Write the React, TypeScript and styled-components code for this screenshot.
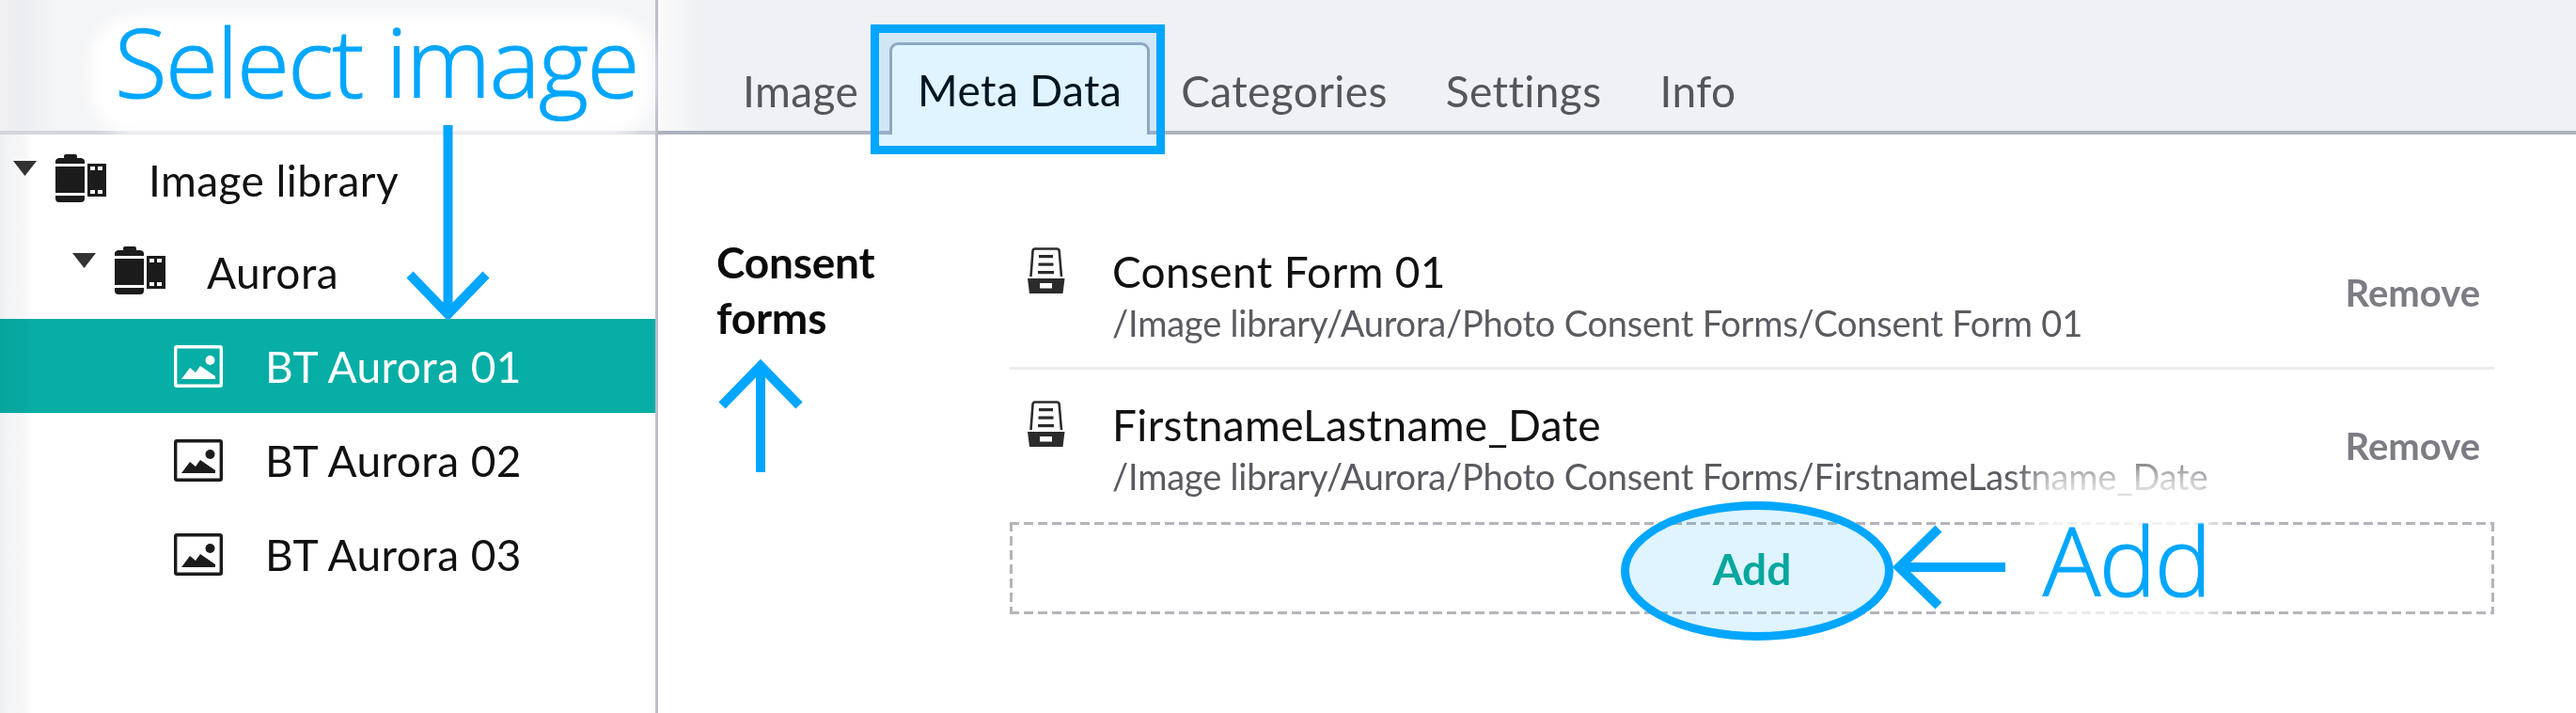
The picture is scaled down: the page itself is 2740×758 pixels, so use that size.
import React from "react";
import styled, { createGlobalStyle } from "styled-components";

const Global = createGlobalStyle`
  html, body { margin: 0; padding: 0; background: #fff; }
  body { font-family: Lato, "Open Sans", "Liberation Sans", sans-serif; }
`;

const Page = styled.div`
  position: relative;
  width: 2740px;
  height: 758px;
  overflow: hidden;
  display: grid;
  grid-template-columns: 697px 3px 1fr;
  background: #fff;
`;

const Sidebar = styled.aside`
  display: flex;
  flex-direction: column;
`;

const SidebarHead = styled.div`
  height: 139px;
  flex: none;
  background: #f4f5f7;
  border-bottom: 4px solid #d3d5dc;
`;

const Tree = styled.div`
  display: flex;
  flex-direction: column;
`;

const TreeRow = styled.div<{ $indent: number; $selected?: boolean; $first?: boolean }>`
  height: ${(p) => (p.$first ? "96px" : "100px")};
  display: flex;
  align-items: center;
  padding-left: ${(p) => p.$indent}px;
  margin-right: -1px;
  font-size: 46px;
  letter-spacing: 0.45px;
  color: ${(p) => (p.$selected ? "#fff" : "#111")};
  background: ${(p) => (p.$selected ? "#07aea5" : "transparent")};
`;

const RowCaret = styled.svg`
  width: 25px;
  height: 16px;
  flex: none;
  margin: -24px 20px 0 0;
`;

const RowIcon = styled.svg<{ $w: number; $h: number; $gap: number; $lift?: number }>`
  width: ${(p) => p.$w}px;
  height: ${(p) => p.$h}px;
  flex: none;
  margin-right: ${(p) => p.$gap}px;
  margin-top: ${(p) => -(p.$lift ?? 0)}px;
`;

const RowLabel = styled.span`
  line-height: 1.2;
  white-space: nowrap;
  margin-top: 2px;
`;

const Divider = styled.div`
  background: #bdbdcb;
`;

const Main = styled.main`
  display: flex;
  flex-direction: column;
`;

const TabBar = styled.nav`
  height: 143px;
  box-sizing: border-box;
  flex: none;
  display: flex;
  align-items: flex-end;
  gap: 4px;
  padding-left: 61px;
  background: #eff1f4;
  border-bottom: 4px solid #aeb2bd;
`;

const Tab = styled.div<{ $active?: boolean }>`
  height: ${(p) => (p.$active ? "98px" : "94px")};
  box-sizing: border-box;
  padding: ${(p) => (p.$active ? "20px 27px 0" : "24px 29px 0")};
  margin-bottom: ${(p) => (p.$active ? "-4px" : "0")};
  display: flex;
  align-items: flex-start;
  font-size: 46px;
  letter-spacing: 0.4px;
  line-height: 56px;
  color: ${(p) => (p.$active ? "#000" : "#55565b")};
  white-space: nowrap;
  ${(p) =>
    p.$active
      ? `background:#fff;border:3px solid #a3a9bb;border-bottom:none;border-radius:9px 9px 0 0;`
      : ""}
`;

const Content = styled.div`
  display: grid;
  grid-template-columns: 312px 1579px;
  padding: 87px 0 0 62px;
`;

const FieldLabel = styled.div`
  font-size: 46px;
  font-weight: 700;
  line-height: 59px;
  letter-spacing: -0.2px;
  color: #0b0b0b;
  margin-top: 19px;
`;

const List = styled.div`
  display: flex;
  flex-direction: column;
`;

const Item = styled.div<{ $last?: boolean }>`
  height: 163px;
  box-sizing: border-box;
  display: flex;
  align-items: flex-start;
  padding: 33px 15px 0 19px;
  border-bottom: ${(p) => (p.$last ? "none" : "3px solid #ebebeb")};
`;

const DrawerIcon = styled.svg`
  width: 40px;
  height: 49px;
  flex: none;
  margin-right: 50px;
`;

const ItemText = styled.div`
  flex: 1;
  display: flex;
  flex-direction: column;
  min-width: 0;
`;

const ItemTitle = styled.div`
  font-size: 46px;
  line-height: 54px;
  letter-spacing: 0.35px;
  color: #111;
  white-space: nowrap;
  margin-top: -1px;
`;

const ItemPath = styled.div`
  font-size: 38px;
  line-height: 52px;
  letter-spacing: -0.2px;
  color: #5a5a60;
  white-space: nowrap;
  margin-top: 1px;
`;

const RemoveBtn = styled.div`
  font-size: 40px;
  font-weight: 700;
  color: #7c7c84;
  line-height: 46px;
  margin-top: 25px;
`;

const AddBox = styled.div`
  position: relative;
  height: 98px;
  margin-top: -1px;
  box-sizing: border-box;
  display: flex;
  align-items: center;
  justify-content: center;
  background:
    repeating-linear-gradient(90deg, #b4b4bb 0 10px, transparent 10px 15px) left top / 100% 3px no-repeat,
    repeating-linear-gradient(90deg, #b4b4bb 0 10px, transparent 10px 15px) left bottom / 100% 3px no-repeat,
    repeating-linear-gradient(180deg, #b4b4bb 0 10px, transparent 10px 15px) left top / 3px 100% no-repeat,
    repeating-linear-gradient(180deg, #b4b4bb 0 10px, transparent 10px 15px) right top / 3px 100% no-repeat;
`;

const AddBtn = styled.div`
  font-size: 46px;
  font-weight: 700;
  color: #09a78f;
`;

const SideTint = styled.div`
  position: absolute;
  left: 0;
  top: 143px;
  bottom: 0;
  width: 33px;
  background: linear-gradient(90deg, #eef0f2 0, #f3f4f5 25%, #f7f7f8 80%, #fff 100%);
  mix-blend-mode: multiply;
`;

const HeadTint = styled.div`
  position: absolute;
  left: 0;
  top: 0;
  width: 60px;
  height: 139px;
  background: linear-gradient(90deg, #f0f0f2, #ecedf0 40%, #f4f5f7 100%);
`;

const TabBarGlow = styled.div`
  position: absolute;
  left: 700px;
  top: 0;
  width: 46px;
  height: 139px;
  background: linear-gradient(90deg, #fafafb, #f5f6f7 50%, #eff1f4 100%);
`;

const SelectGlow = styled.div`
  position: absolute;
  left: 96px;
  top: 16px;
  width: 598px;
  height: 127px;
  border-radius: 48px;
  background: #fff;
  filter: blur(8px);
`;

const AddGlow = styled.div`
  position: absolute;
  left: 2160px;
  top: 498px;
  width: 200px;
  height: 170px;
  background: #fff;
  opacity: 0.82;
  filter: blur(14px);
`;

const Callout = styled.div`
  position: absolute;
  font-family: "Open Sans", "Liberation Sans", sans-serif;
  font-weight: 300;
  color: #00a6ff;
  font-size: 102px;
  line-height: 122px;
  letter-spacing: -1.6px;
  -webkit-text-stroke: 1.2px #00a6ff;
  white-space: nowrap;
`;

const SelectCallout = styled(Callout)`
  left: 122px;
  top: 4px;
`;

const AddCallout = styled(Callout)`
  left: 2173px;
  top: 534px;
`;

const TabHighlight = styled.div`
  position: absolute;
  left: 926px;
  top: 26px;
  width: 313px;
  height: 138px;
  box-sizing: border-box;
  border: 9px solid #00a6ff;
  background: rgba(0, 166, 255, 0.125);
`;

const AddRing = styled.div`
  position: absolute;
  left: 1724px;
  top: 533px;
  width: 290px;
  height: 148px;
  box-sizing: border-box;
  border: 9px solid #00a6ff;
  border-radius: 50%;
  background: rgba(0, 166, 255, 0.125);
`;

const ArrowLayer = styled.svg`
  position: absolute;
  left: 0;
  top: 0;
  width: 2740px;
  height: 758px;
  pointer-events: none;
`;

const Film = () => (
  <>
    <rect x="9" y="0" width="14" height="5" rx="2" fill="#1c1b1b" />
    <path d="M0 9a4 4 0 0 1 4-5h23a4 4 0 0 1 4 5v1H0z" fill="#1c1b1b" />
    <rect x="0" y="13" width="31" height="28" fill="#1c1b1b" />
    <path d="M0 44h31v3a4 4 0 0 1-4 4H4a4 4 0 0 1-4-4z" fill="#1c1b1b" />
    <rect x="34" y="10" width="20" height="35" fill="#1c1b1b" />
    <g fill="#fff">
      <rect x="37" y="13" width="5" height="4" />
      <rect x="45" y="13" width="5" height="4" />
      <rect x="37" y="38" width="5" height="4" />
      <rect x="45" y="38" width="5" height="4" />
    </g>
  </>
);

const Caret = () => (
  <RowCaret viewBox="0 0 25 16">
    <path d="M0 0h25L12.5 16z" fill="#333" />
  </RowCaret>
);

const Picture = ({ color }: { color: string }) => (
  <RowIcon $w={52} $h={45} $gap={45} viewBox="0 0 52 45">
    <rect x="1.7" y="1.7" width="48.6" height="41.6" rx="1.5" fill="none" stroke={color} strokeWidth="3.4" />
    <circle cx="38.5" cy="16" r="5" fill={color} />
    <path d="M8 36 L17 24 L23 29 L28 22 L44 33 V36z" fill={color} />
  </RowIcon>
);

const Drawer = () => (
  <DrawerIcon viewBox="0 0 40 49">
    <path d="M3.5 31 L5.5 4 Q5.7 1.5 8 1.5 H31 Q33.5 1.5 33.7 4 L36 31" fill="none" stroke="#2b2b2b" strokeWidth="2.6" />
    <g fill="#2b2b2b">
      <rect x="12" y="8" width="15" height="3.2" />
      <rect x="11.5" y="16.5" width="16" height="3.2" />
      <rect x="11" y="25" width="17" height="3.2" />
      <path d="M0 33 H39.5 L37.5 49 H2z" />
    </g>
    <rect x="13" y="38" width="13" height="5.5" fill="#fff" />
  </DrawerIcon>
);

const items = [
  { title: "Consent Form 01", path: "/Image library/Aurora/Photo Consent Forms/Consent Form 01" },
  { title: "FirstnameLastname_Date", path: "/Image library/Aurora/Photo Consent Forms/FirstnameLastname_Date" },
];

export default function App() {
  return (
    <Page>
      <Global />
      <Sidebar>
        <SidebarHead />
        <Tree>
          <TreeRow $first $indent={14}>
            <Caret />
            <RowIcon $w={54} $h={51} $gap={45} $lift={4} viewBox="0 0 54 51"><Film /></RowIcon>
            <RowLabel>Image library</RowLabel>
          </TreeRow>
          <TreeRow $indent={77}>
            <Caret />
            <RowIcon $w={54} $h={51} $gap={44} $lift={4} viewBox="0 0 54 51"><Film /></RowIcon>
            <RowLabel>Aurora</RowLabel>
          </TreeRow>
          <TreeRow $selected $indent={185}>
            <Picture color="#fff" />
            <RowLabel>BT Aurora 01</RowLabel>
          </TreeRow>
          <TreeRow $indent={185}>
            <Picture color="#1c1b1b" />
            <RowLabel>BT Aurora 02</RowLabel>
          </TreeRow>
          <TreeRow $indent={185}>
            <Picture color="#1c1b1b" />
            <RowLabel>BT Aurora 03</RowLabel>
          </TreeRow>
        </Tree>
      </Sidebar>
      <Divider />
      <Main>
        <TabBar>
          <Tab>Image</Tab>
          <Tab $active>Meta Data</Tab>
          <Tab>Categories</Tab>
          <Tab>Settings</Tab>
          <Tab>Info</Tab>
        </TabBar>
        <Content>
          <FieldLabel>
            Consent
            <br />
            forms
          </FieldLabel>
          <List>
            {items.map((it, i) => (
              <Item key={it.title} $last={i === items.length - 1}>
                <Drawer />
                <ItemText>
                  <ItemTitle>{it.title}</ItemTitle>
                  <ItemPath>{it.path}</ItemPath>
                </ItemText>
                <RemoveBtn>Remove</RemoveBtn>
              </Item>
            ))}
            <AddBox>
              <AddBtn>Add</AddBtn>
            </AddBox>
          </List>
        </Content>
      </Main>
      <HeadTint />
      <TabBarGlow />
      <SideTint />
      <SelectGlow />
      <AddGlow />
      <SelectCallout>Select image</SelectCallout>
      <AddCallout>Add</AddCallout>
      <TabHighlight />
      <AddRing />
      <ArrowLayer viewBox="0 0 2740 758">
        <g fill="none" stroke="#00a6ff" strokeWidth="10">
          <path d="M476.5 133V334M436 292 L476.5 334 L517 292" />
          <path d="M809 502V390M768 431 L809 389 L850 431" />
          <path d="M2133 603H2020M2062 562 L2020 603 L2062 644" />
        </g>
      </ArrowLayer>
    </Page>
  );
}
